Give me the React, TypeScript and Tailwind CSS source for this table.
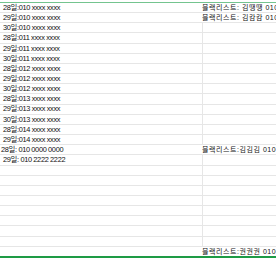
import React from "react";

const left: string[] = [
  "28일:010 xxxx xxxx",
  "29일:010 xxxx xxxx",
  "30일:010 xxxx xxxx",
  "28일:011 xxxx xxxx",
  "29일:011 xxxx xxxx",
  "30일:011 xxxx xxxx",
  "28일:012 xxxx xxxx",
  "29일:012 xxxx xxxx",
  "30일:012 xxxx xxxx",
  "28일:013 xxxx xxxx",
  "29일:013 xxxx xxxx",
  "30일:013 xxxx xxxx",
  "28일:014 xxxx xxxx",
  "29일:014 xxxx xxxx",
  "28일: 010 0000 0000",
  "29일: 010 2222 2222",
  "", "", "", "", "", "", "", "", "",
];

const right: Record<number, string> = {
  0: "블랙리스트: 김땡땡 010",
  1: "블랙리스트: 김캄캄 010",
  14: "블랙리스트:김김김 010",
  24: "블랙리스트:권권권 010",
};

export default function App() {
  return (
    <div
      className="w-[276px] h-[260px] bg-white overflow-hidden text-[#111] flex flex-col"
      style={{ fontFamily: '"Liberation Sans", "Noto Sans CJK KR", sans-serif' }}
    >
      <div className="h-[2px] shrink-0" />
      <div className="h-px shrink-0 bg-[#74c48f]" />
      <div className="h-[253px] shrink-0 flex flex-col">
        {left.map((t, i) => (
          <div
            key={i}
            className={`flex-1 flex min-h-0 ${i < 24 ? "border-b border-[#e6e6e6]" : ""}`}
          >
            <div
              className={`w-[202px] shrink-0 flex items-center text-[7.4px] leading-none whitespace-nowrap tracking-[-0.35px] ${
                i === 14 ? "pl-[1px]" : "pl-[3px]"
              }`}
            >
              {t}
            </div>
            {right[i] ? (
              <div className="flex-1 flex items-center text-[7px] leading-none whitespace-nowrap overflow-hidden tracking-[0.55px]">
                {right[i]}
              </div>
            ) : (
              <div className="flex-1 border-l border-[#e6e6e6]" />
            )}
          </div>
        ))}
      </div>
      <div className="h-[2px] shrink-0 bg-[#1e9b45]" />
    </div>
  );
}
